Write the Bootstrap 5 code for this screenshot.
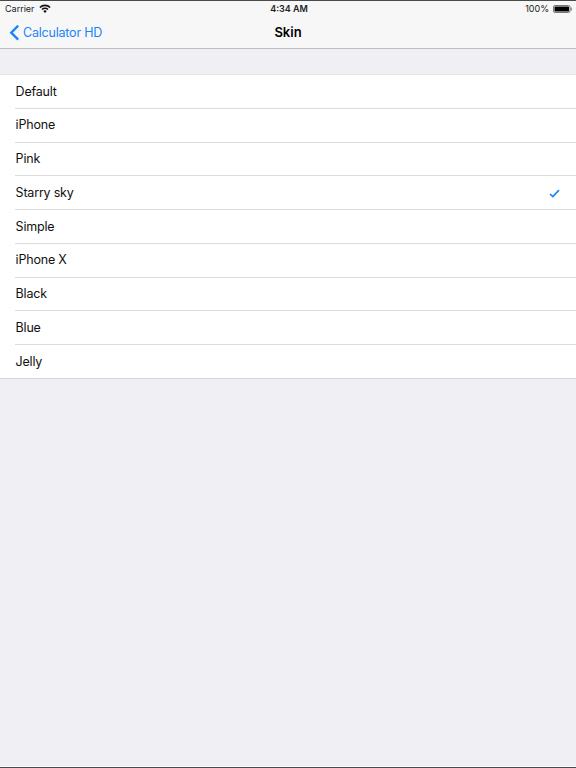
<!DOCTYPE html>
<html lang="en"><head><meta charset="utf-8"><title>Skin</title>
<link rel="stylesheet" href="https://cdn.jsdelivr.net/npm/bootstrap@5.3.0/dist/css/bootstrap.min.css">
<style>
html,body{height:100%}
body{background:#efeff4;font-family:"Inter","Liberation Sans",sans-serif;color:#111;overflow:hidden}
.screen{height:768px;border-top:1px solid #4a4a4a;border-bottom:1px solid #4a4a4a}
.top-bar{height:48px;background:#f7f7f8;border-bottom:1px solid #bdbdc2}
.status-row{height:15px;font-size:9px;line-height:15px;color:#222;padding:0 4px 0 5px}
.status-time{font-weight:600;left:2px;right:0;top:0}
.status-gap{gap:4px}
.status-gap-r{gap:4px}
.nav-row{height:32px;font-size:12.5px;letter-spacing:-.2px;padding-top:2px}
.back-link{color:#1b84fb;text-decoration:none;left:9px;top:calc(50% + 1px);transform:translateY(-50%);gap:3px}
.nav-title{font-weight:600;font-size:13px;letter-spacing:0;color:#000}
.skin-list{margin-top:25px;margin-bottom:0;background:#fff;border-top:1px solid #e6e6ea;border-bottom:1px solid #d4d4d8}
.skin-item{height:33.75px;font-size:12.5px;letter-spacing:-.2px;padding:1px 16px 0 .6px;margin-left:15px;border-bottom:1px solid #dcdcdf}
.skin-item:last-child{border-bottom:0;height:32.75px}
.home-edge{height:1px;background:#fff}
</style></head><body>
<div class="screen d-flex flex-column">
  <header class="top-bar">
    <div class="status-row d-flex justify-content-between align-items-center position-relative">
      <span class="d-flex align-items-center status-gap">Carrier
        <svg width="12" height="9" viewBox="0 0 12 9"><path fill="#111" d="M6 9 4.2 7a2.6 2.6 0 0 1 3.6 0ZM3.4 6.1 2.4 5a5.2 5.2 0 0 1 7.2 0L8.6 6.1a3.8 3.8 0 0 0-5.2 0ZM1.5 4.1.3 2.9a8.2 8.2 0 0 1 11.4 0L10.5 4.1a6.6 6.6 0 0 0-9 0Z"/></svg>
      </span>
      <span class="status-time position-absolute text-center">4:34 AM</span>
      <span class="d-flex align-items-center status-gap-r">100%
        <svg width="19" height="8" viewBox="0 0 19 8"><rect x=".5" y=".5" width="16.5" height="7" rx="1.5" fill="none" stroke="#777"/><rect x="1.5" y="1.5" width="14.5" height="5" rx=".6" fill="#000"/><rect x="17.6" y="2.6" width="1.2" height="2.8" rx=".5" fill="#777"/></svg>
      </span>
    </div>
    <div class="nav-row d-flex align-items-center justify-content-center position-relative">
      <a href="#" class="back-link position-absolute d-flex align-items-center">
        <svg width="11" height="16" viewBox="0 0 11 16"><path d="M9.2 1 2.2 8 9.2 15" fill="none" stroke="#1b84fb" stroke-width="2.3"/></svg>
        <span>Calculator HD</span>
      </a>
      <span class="nav-title">Skin</span>
    </div>
  </header>
  <ul class="skin-list list-unstyled">
    <li class="skin-item d-flex align-items-center justify-content-between">Default</li>
    <li class="skin-item d-flex align-items-center justify-content-between">iPhone</li>
    <li class="skin-item d-flex align-items-center justify-content-between">Pink</li>
    <li class="skin-item d-flex align-items-center justify-content-between">Starry sky
      <svg width="11" height="9" viewBox="0 0 11 9"><path d="M1 5 3.8 7.6 10 1.2" fill="none" stroke="#1b84fb" stroke-width="1.7"/></svg></li>
    <li class="skin-item d-flex align-items-center justify-content-between">Simple</li>
    <li class="skin-item d-flex align-items-center justify-content-between">iPhone X</li>
    <li class="skin-item d-flex align-items-center justify-content-between">Black</li>
    <li class="skin-item d-flex align-items-center justify-content-between">Blue</li>
    <li class="skin-item d-flex align-items-center justify-content-between">Jelly</li>
  </ul>
  <div class="home-edge mt-auto"></div>
</div>
<script src="https://cdn.jsdelivr.net/npm/bootstrap@5.3.0/dist/js/bootstrap.bundle.min.js"></script>
</body></html>
